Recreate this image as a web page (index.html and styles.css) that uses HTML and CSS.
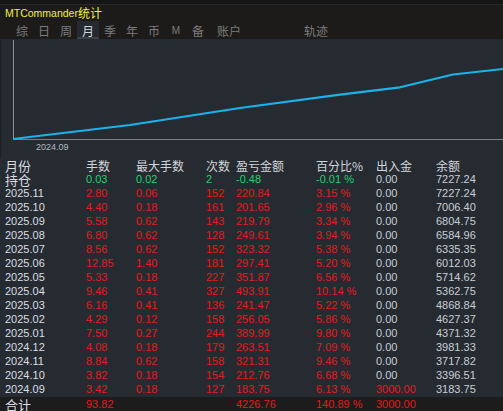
FILE: index.html
```html
<!DOCTYPE html>
<html>
<head>
<meta charset="utf-8">
<link rel="stylesheet" href="styles.css">
</head>
<body>
<div class="app">
  <div class="titlebar"><span class="title-en">MTCommander</span><span class="title-cn">统计</span></div>
  <div class="tabs">
    <span class="tab">综</span>
    <span class="tab">日</span>
    <span class="tab">周</span>
    <span class="tab active">月</span>
    <span class="tab">季</span>
    <span class="tab">年</span>
    <span class="tab">币</span>
    <span class="tab tab-m">M</span>
    <span class="tab">备</span>
    <span class="tab tab-acct">账户</span>
    <span class="tab tab-track">轨迹</span>
  </div>
  <div class="chart">
    <svg class="chart-svg" width="503" height="119" viewBox="0 0 503 119">
      <line x1="13.5" y1="1" x2="13.5" y2="100.5" stroke="#8c9096" stroke-width="1"/>
      <line x1="13" y1="100.5" x2="503" y2="100.5" stroke="#7c8086" stroke-width="1"/>
      <polyline fill="none" stroke="#1bb2ec" stroke-width="2.2" stroke-linejoin="round"
        points="13,100 130,86 240,69 340,55.7 400,48.3 427,41.7 453,35.5 503,30"/>
      <text x="36" y="110.5" class="axis-label">2024.09</text>
    </svg>
  </div>
  <div class="table">
    <div class="row head">
      <span class="c1 big">月份</span><span>手数</span><span>最大手数</span><span>次数</span><span>盈亏金额</span><span>百分比%</span><span>出入金</span><span>余额</span>
    </div>
    <div class="row">
      <span class="c1 big">持仓</span><span class="g">0.03</span><span class="g">0.02</span><span class="g">2</span><span class="g">-0.48</span><span class="g">-0.01 %</span><span class="w">0.00</span><span class="w">7227.24</span>
    </div>
    <div class="row"><span class="c1">2025.11</span><span class="r">2.80</span><span class="r">0.06</span><span class="r">152</span><span class="r">220.84</span><span class="r">3.15 %</span><span class="w">0.00</span><span class="w">7227.24</span></div>
    <div class="row"><span class="c1">2025.10</span><span class="r">4.40</span><span class="r">0.18</span><span class="r">161</span><span class="r">201.65</span><span class="r">2.96 %</span><span class="w">0.00</span><span class="w">7006.40</span></div>
    <div class="row"><span class="c1">2025.09</span><span class="r">5.58</span><span class="r">0.62</span><span class="r">143</span><span class="r">219.79</span><span class="r">3.34 %</span><span class="w">0.00</span><span class="w">6804.75</span></div>
    <div class="row"><span class="c1">2025.08</span><span class="r">6.80</span><span class="r">0.62</span><span class="r">128</span><span class="r">249.61</span><span class="r">3.94 %</span><span class="w">0.00</span><span class="w">6584.96</span></div>
    <div class="row"><span class="c1">2025.07</span><span class="r">8.56</span><span class="r">0.62</span><span class="r">152</span><span class="r">323.32</span><span class="r">5.38 %</span><span class="w">0.00</span><span class="w">6335.35</span></div>
    <div class="row"><span class="c1">2025.06</span><span class="r">12.85</span><span class="r">1.40</span><span class="r">181</span><span class="r">297.41</span><span class="r">5.20 %</span><span class="w">0.00</span><span class="w">6012.03</span></div>
    <div class="row"><span class="c1">2025.05</span><span class="r">5.33</span><span class="r">0.18</span><span class="r">227</span><span class="r">351.87</span><span class="r">6.56 %</span><span class="w">0.00</span><span class="w">5714.62</span></div>
    <div class="row"><span class="c1">2025.04</span><span class="r">9.46</span><span class="r">0.41</span><span class="r">327</span><span class="r">493.91</span><span class="r">10.14 %</span><span class="w">0.00</span><span class="w">5362.75</span></div>
    <div class="row"><span class="c1">2025.03</span><span class="r">6.16</span><span class="r">0.41</span><span class="r">136</span><span class="r">241.47</span><span class="r">5.22 %</span><span class="w">0.00</span><span class="w">4868.84</span></div>
    <div class="row"><span class="c1">2025.02</span><span class="r">4.29</span><span class="r">0.12</span><span class="r">158</span><span class="r">256.05</span><span class="r">5.86 %</span><span class="w">0.00</span><span class="w">4627.37</span></div>
    <div class="row"><span class="c1">2025.01</span><span class="r">7.50</span><span class="r">0.27</span><span class="r">244</span><span class="r">389.99</span><span class="r">9.80 %</span><span class="w">0.00</span><span class="w">4371.32</span></div>
    <div class="row"><span class="c1">2024.12</span><span class="r">4.08</span><span class="r">0.18</span><span class="r">179</span><span class="r">263.51</span><span class="r">7.09 %</span><span class="w">0.00</span><span class="w">3981.33</span></div>
    <div class="row"><span class="c1">2024.11</span><span class="r">8.84</span><span class="r">0.62</span><span class="r">158</span><span class="r">321.31</span><span class="r">9.46 %</span><span class="w">0.00</span><span class="w">3717.82</span></div>
    <div class="row"><span class="c1">2024.10</span><span class="r">3.82</span><span class="r">0.18</span><span class="r">154</span><span class="r">212.76</span><span class="r">6.68 %</span><span class="w">0.00</span><span class="w">3396.51</span></div>
    <div class="row"><span class="c1">2024.09</span><span class="r">3.42</span><span class="r">0.18</span><span class="r">127</span><span class="r">183.75</span><span class="r">6.13 %</span><span class="r">3000.00</span><span class="w">3183.75</span></div>
    <div class="row total"><span class="c1 big">合计</span><span class="r">93.82</span><span></span><span></span><span class="r">4226.76</span><span class="r">140.89 %</span><span class="r">3000.00</span><span></span></div>
  </div>
</div>
</body>
</html>
```
FILE: styles.css
```css
html, body {
  margin: 0;
  padding: 0;
  background: #262b32;
}
body {
  width: 503px;
  height: 411px;
  overflow: hidden;
  font-family: "Liberation Sans", "Noto Sans CJK SC", sans-serif;
}
.app {
  display: flex;
  flex-direction: column;
  width: 503px;
  height: 411px;
}
.titlebar {
  height: 19px;
  background: #1c1b1a;
  border-top: 4px solid #151515;
  box-shadow: inset 0 1px 0 #2b2b2b;
  display: flex;
  align-items: center;
  padding-left: 5px;
  color: #f0f03a;
}
.title-en {
  font-size: 10.5px;
}
.title-cn {
  font-family: "Noto Sans CJK SC", sans-serif;
  font-size: 12px;
}
.tabs {
  height: 18px;
  background: #1c1b1a;
  display: flex;
  align-items: stretch;
  padding-left: 11px;
  font-family: "Noto Sans CJK SC", sans-serif;
  font-size: 12px;
  color: #7c7c7c;
}
.tab {
  width: 22px;
  display: flex;
  align-items: center;
  justify-content: center;
  box-sizing: border-box;
}
.tab.active {
  background: #262a30;
  color: #cfd6de;
  border-bottom: 2px solid #394048;
  padding-top: 2px;
}
.tab-m {
  font-family: "Liberation Sans", sans-serif;
  font-size: 10px;
}
.tab-acct {
  width: 34px;
  margin-left: 3px;
}
.tab-track {
  width: 34px;
  margin-left: 53px;
}
.chart {
  height: 119px;
  background: #262b32;
  border-left: 1px solid #1d2025;
}
.chart-svg {
  display: block;
  margin-left: -1px;
}
.axis-label {
  font-family: "Liberation Sans", sans-serif;
  font-size: 9px;
  fill: #b4bac2;
}
.table {
  flex: 1;
  display: flex;
  flex-direction: column;
  background: #262b32;
}
.row {
  display: grid;
  grid-template-columns: 81px 50px 70px 30px 80px 60px 60px 1fr;
  align-items: center;
  height: 14px;
  line-height: 13px;
  padding-left: 5px;
  font-size: 11px;
  color: #d6dbe1;
  white-space: nowrap;
}
.head {
  font-family: "Noto Sans CJK SC", sans-serif;
  font-size: 12px;
  color: #d2d4d8;
}
.big {
  font-family: "Noto Sans CJK SC", sans-serif;
  font-size: 13px;
  line-height: 13px;
  color: #dde1e6;
}
.c1 {
  color: #d8dde3;
}
.g {
  color: #19d46c;
}
.r {
  color: #e51a1a;
}
.w {
  color: #c8cdd3;
}
.total {
  background: #1c1c1c;
  height: 14px;
  margin-top: 1px;
}
```
